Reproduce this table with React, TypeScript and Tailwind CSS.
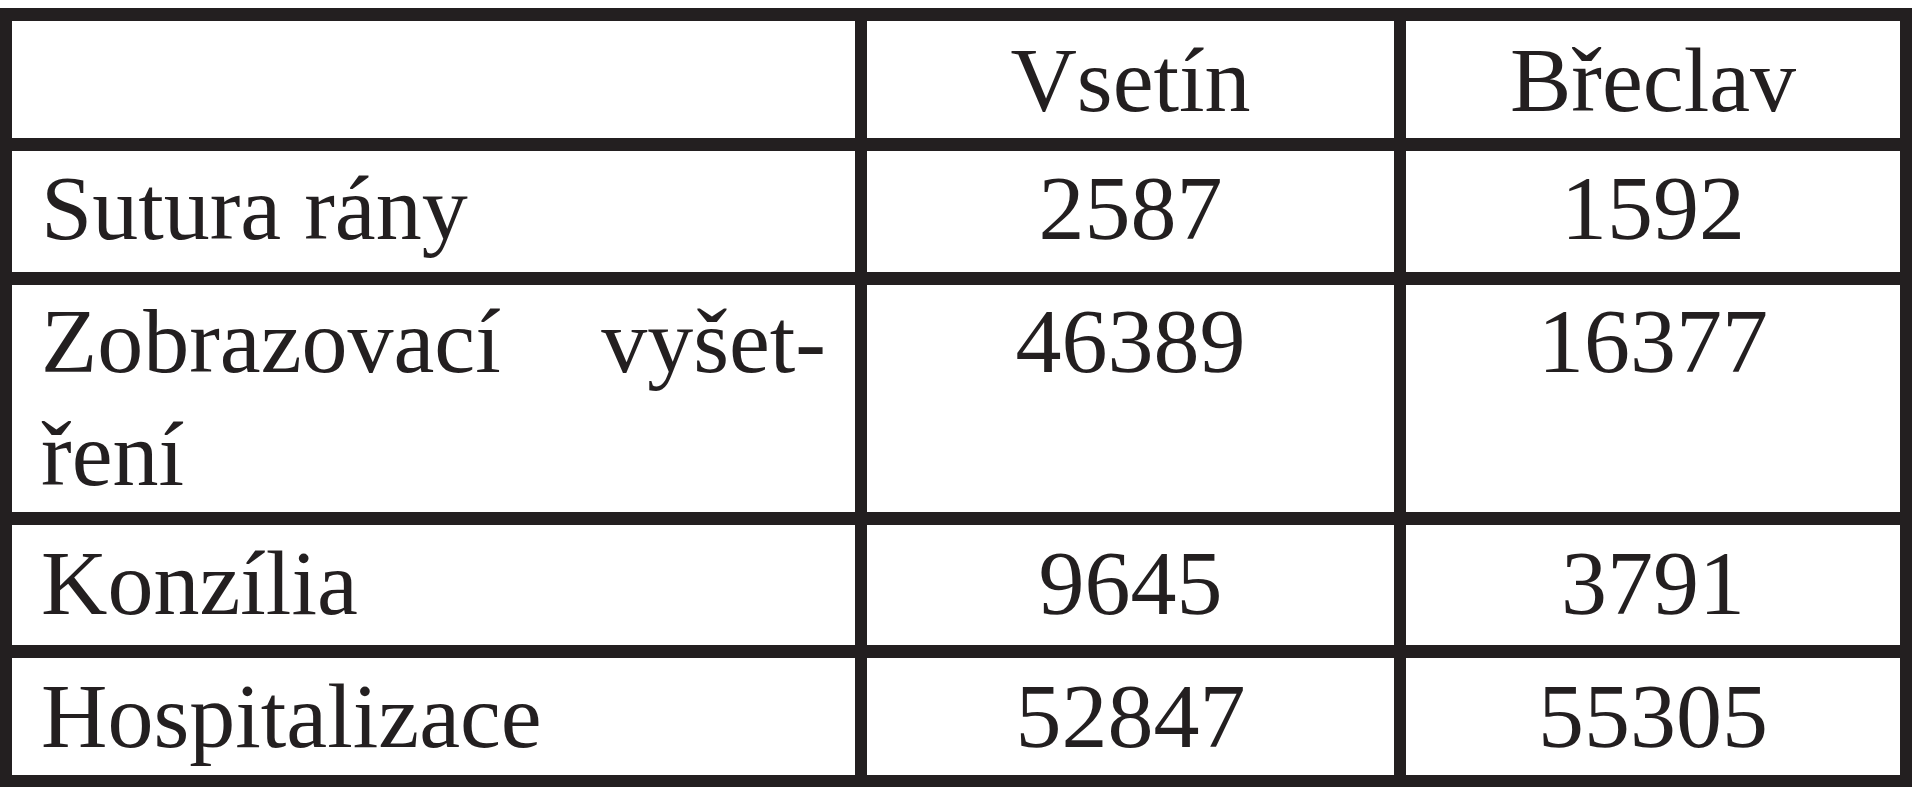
const rows = [
  { label: "Sutura rány", a: "2587", b: "1592", pt: "pt-[1px]" },
  { label: null, a: "46389", b: "16377", pt: "pt-0" },
  { label: "Konzília", a: "9645", b: "3791", pt: "pt-[2px]" },
  { label: "Hospitalizace", a: "52847", b: "55305", pt: "pt-[2px]" },
];

export default function App() {
  return (
    <div
      className="w-[1927px] h-[800px] bg-white pt-[8px] text-[#231f20]"
      style={{ fontFamily: '"Liberation Serif", "Times New Roman", serif' }}
    >
      <div className="w-[1912px] grid grid-cols-[843px_527px_494px] grid-rows-[117px_121px_227px_120px_117px] gap-x-[12px] gap-y-[13px] bg-[#231f20] pl-[12px] pr-[12px] pt-[13px] pb-[12px] text-[92px] leading-[113px]">
        {/* Header */}
        <div className="bg-white" />
        <div className="bg-white text-center pt-[3px]">Vsetín</div>
        <div className="bg-white text-center pt-[3px]">Břeclav</div>

        {rows.map((row, i) => (
          <div key={i} className="contents">
            <div className={`bg-white px-[29px] ${row.pt}`}>
              {row.label ? (
                row.label
              ) : (
                <>
                  <div className="flex justify-between">
                    <span>Zobrazovací</span>
                    <span>vyšet-</span>
                  </div>
                  <div>ření</div>
                </>
              )}
            </div>
            <div className={`bg-white text-center ${row.pt}`}>{row.a}</div>
            <div className={`bg-white text-center ${row.pt}`}>{row.b}</div>
          </div>
        ))}
      </div>
    </div>
  );
}
